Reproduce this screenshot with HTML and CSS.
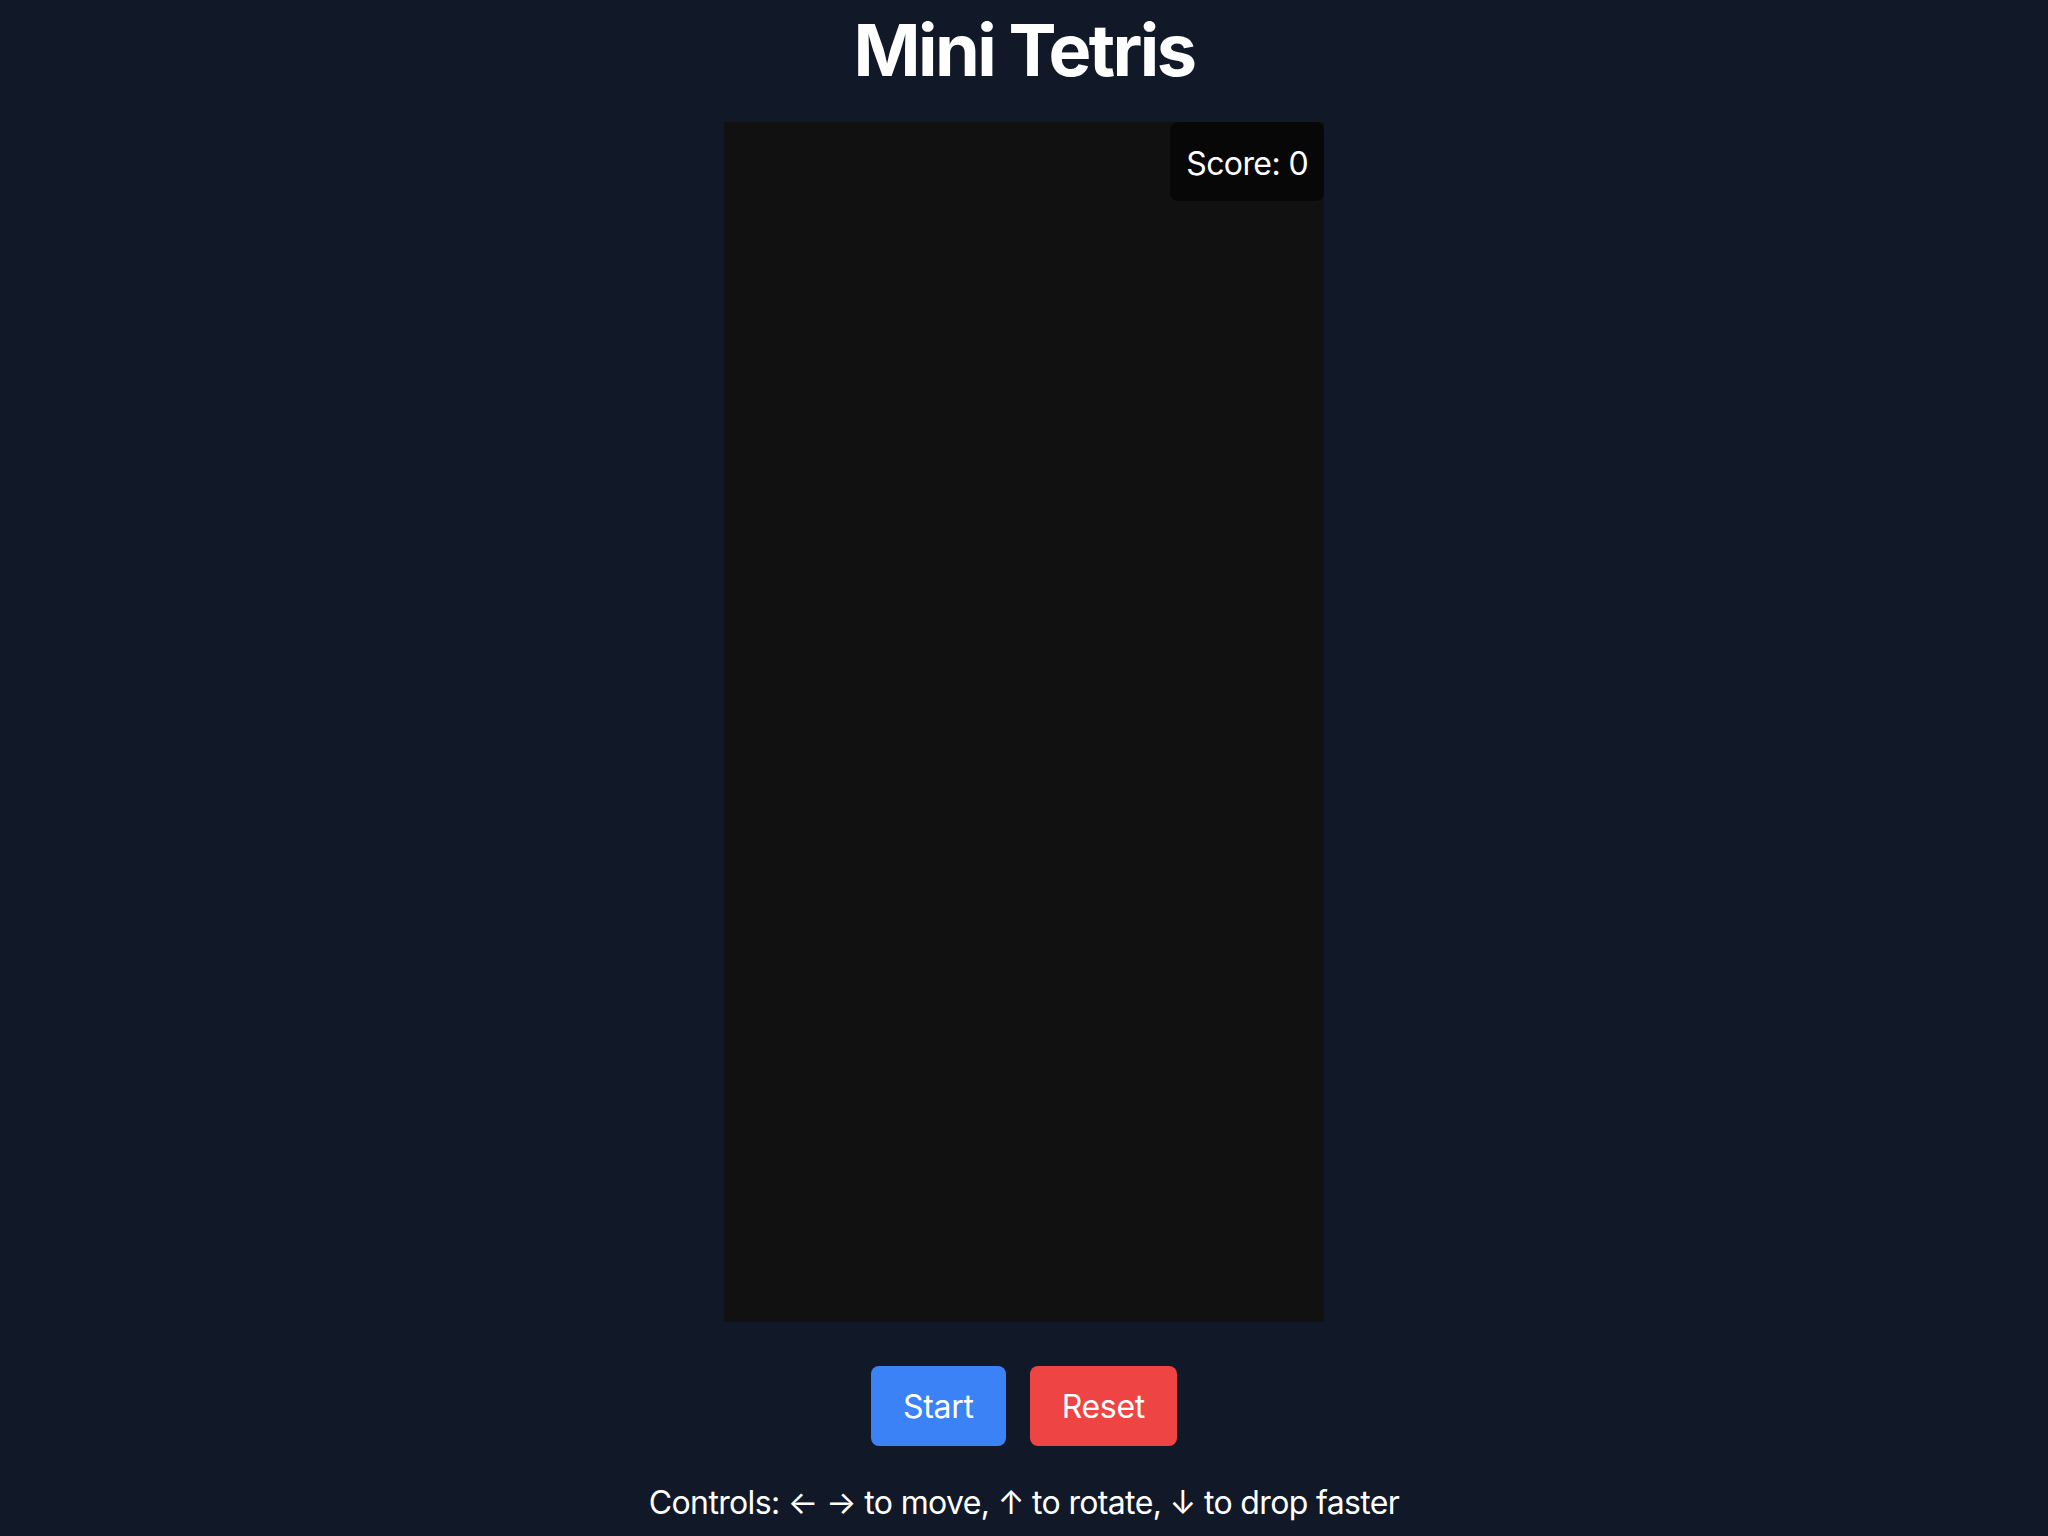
FILE: index.html
```html
<!DOCTYPE html>
<html lang="en">
<head>
<meta charset="utf-8">
<title>Mini Tetris</title>
<link rel="stylesheet" href="styles.css">
</head>
<body>
<main class="app">
  <h1 class="title">Mini Tetris</h1>
  <div class="board">
    <div class="score">Score: 0</div>
  </div>
  <div class="buttons">
    <button class="btn btn-start">Start</button>
    <button class="btn btn-reset">Reset</button>
  </div>
  <p class="controls">Controls: ← → to move, ↑ to rotate, ↓ to drop faster</p>
</main>
</body>
</html>
```
FILE: styles.css
```css
html, body {
  margin: 0;
  padding: 0;
  background: #111827;
  color: #ffffff;
  font-family: Inter, "Liberation Sans", Arial, sans-serif;
}
.app {
  display: flex;
  flex-direction: column;
  align-items: center;
  min-height: 1536px;
}
.title {
  margin: 10px 0 0;
  font-size: 72px;
  line-height: 80px;
  font-weight: 700;
  letter-spacing: -2.6px;
}
.board {
  position: relative;
  width: 600px;
  height: 1200px;
  margin-top: 32px;
  background: #111111;
}
.score {
  position: absolute;
  top: 0;
  right: 0;
  padding: 18px 16px 14px;
  font-size: 32px;
  line-height: 47px;
  letter-spacing: -0.6px;
  background: rgba(0, 0, 0, 0.55);
  border-radius: 8px;
}
.buttons {
  display: flex;
  gap: 24px;
  margin-top: 44px;
}
.btn {
  border: none;
  border-radius: 8px;
  padding: 17px 32px 15px;
  font-family: inherit;
  font-size: 32px;
  line-height: 48px;
  letter-spacing: -0.3px;
  color: #ffffff;
  cursor: pointer;
}
.btn-start { background: #3b82f6; }
.btn-reset { background: #ef4444; }
.controls {
  margin: 33px 0 0;
  font-size: 32px;
  line-height: 48px;
  letter-spacing: -0.65px;
}
```
